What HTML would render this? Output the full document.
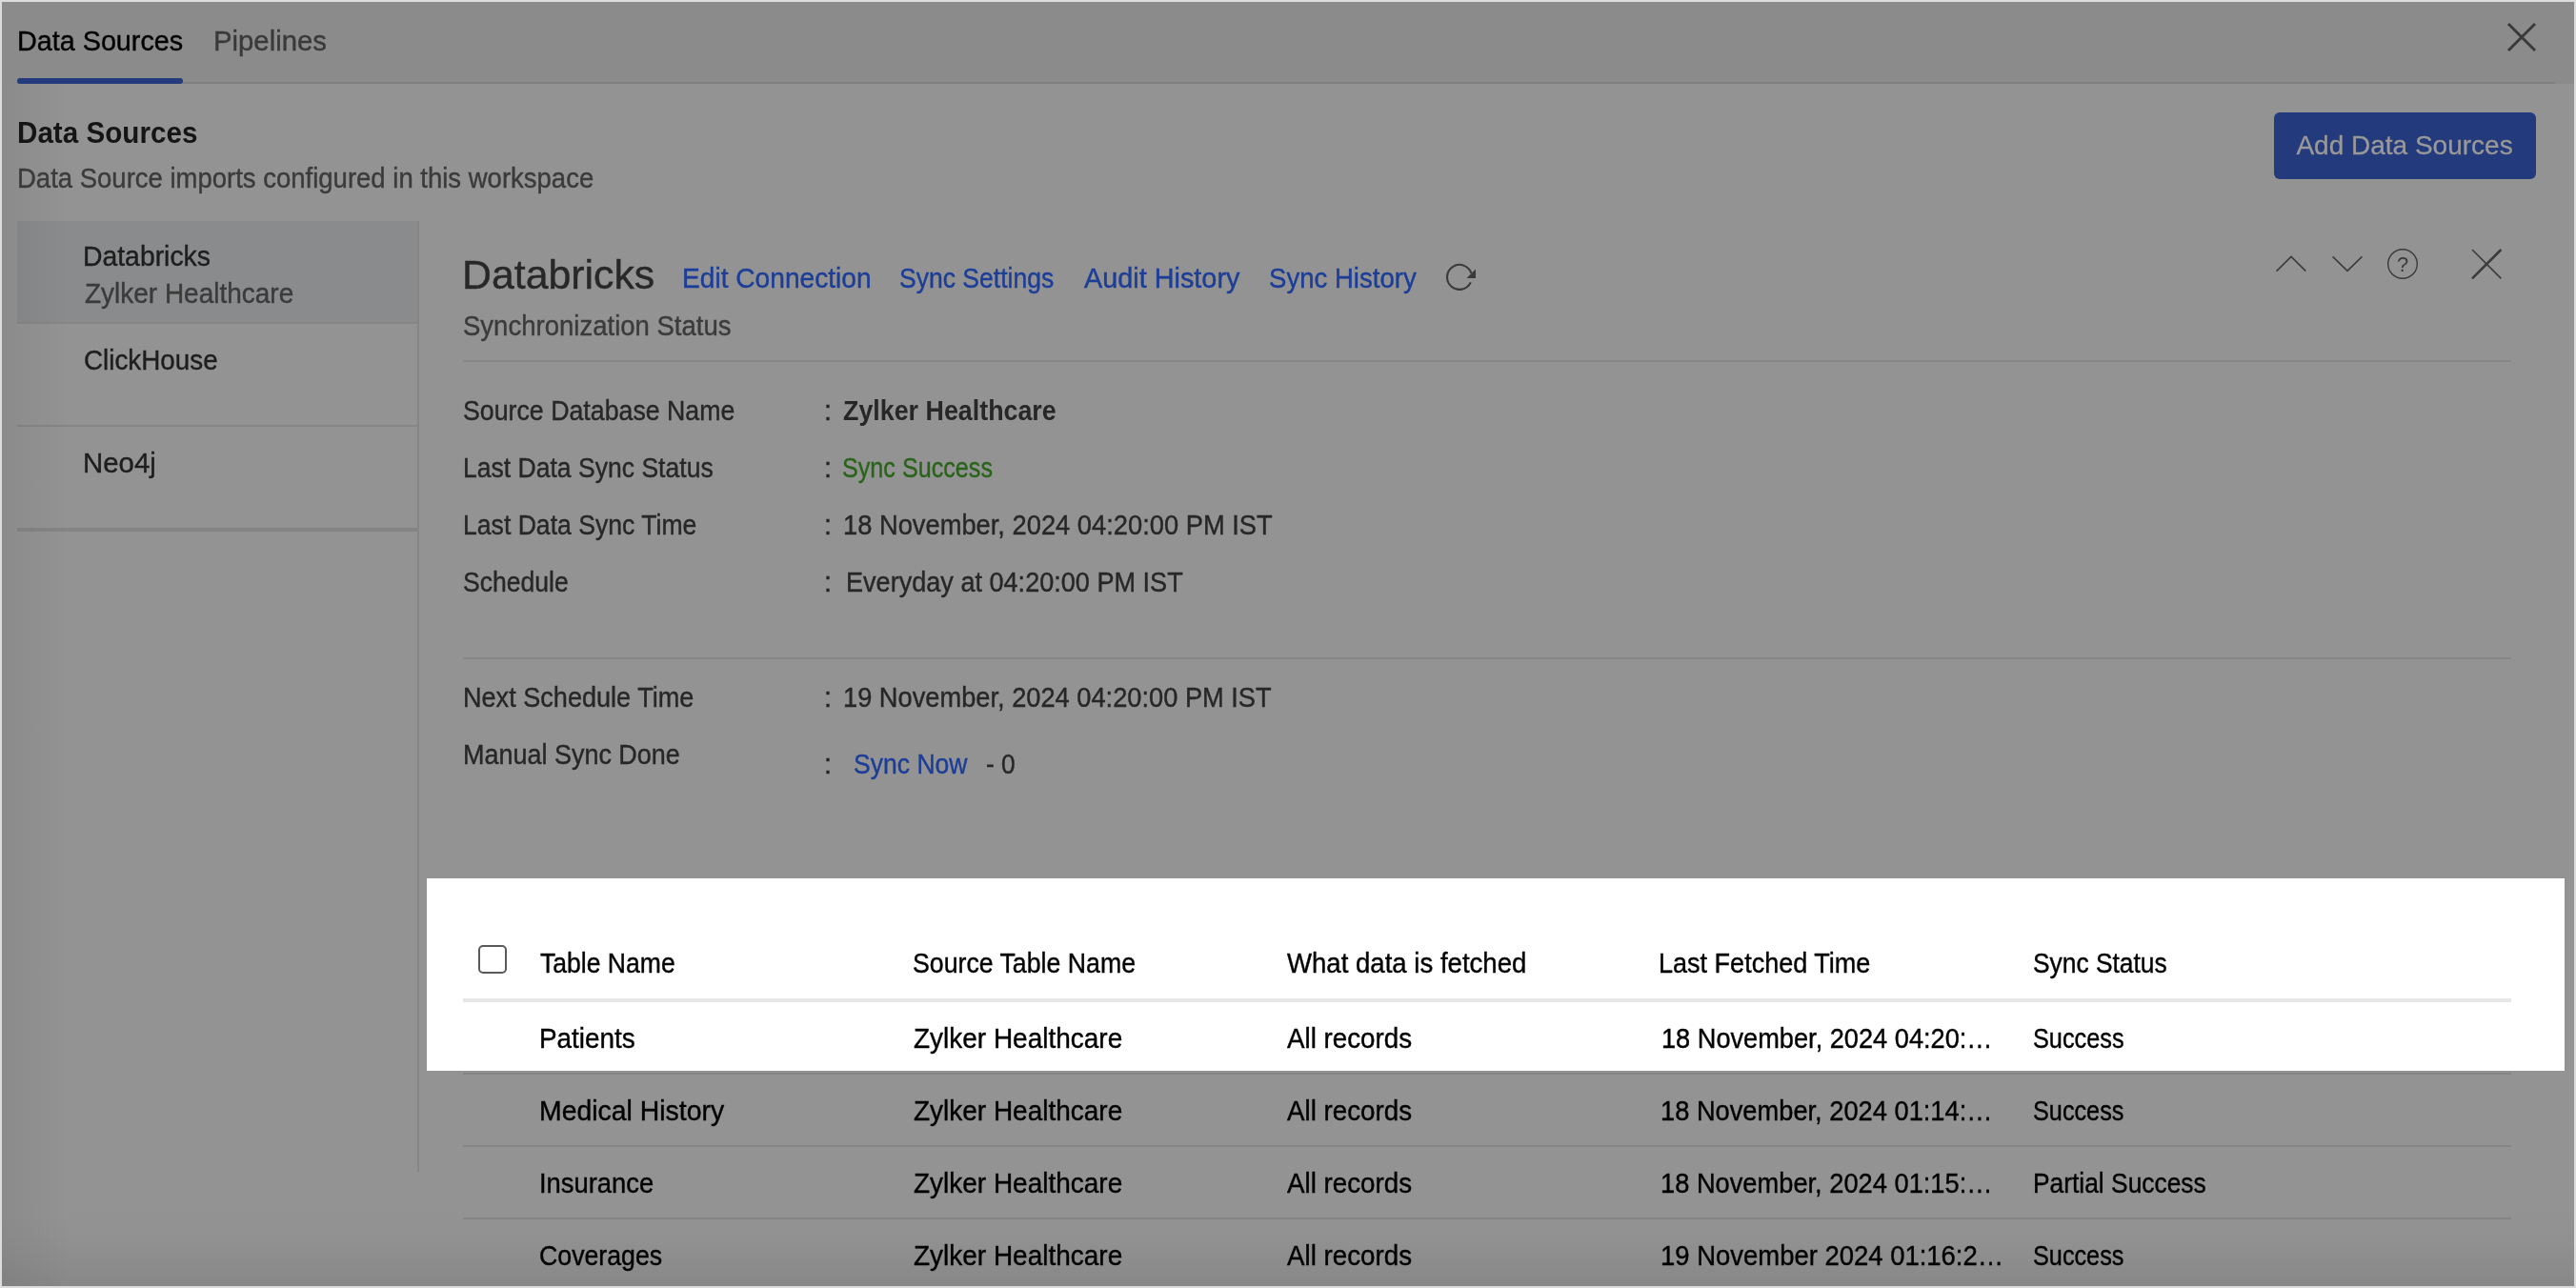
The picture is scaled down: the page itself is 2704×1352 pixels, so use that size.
<!DOCTYPE html>
<html lang="en">
<head>
<meta charset="utf-8">
<title>Data Sources</title>
<style>
html,body{margin:0;padding:0;}
body{width:2704px;height:1352px;position:relative;overflow:hidden;background:#939393;font-family:"Liberation Sans",sans-serif;}
.abs{position:absolute;}
.t,.q{position:absolute;white-space:nowrap;line-height:1;font-family:"Liberation Sans",sans-serif;-webkit-text-stroke:0.4px currentColor;}
#t4{-webkit-text-stroke:0.3px currentColor;}
#frame{left:0;top:0;width:2700px;height:1348px;border:2px solid #dcdcdc;z-index:50;pointer-events:none;}
#topbar{left:2px;top:2px;width:2700px;height:86px;background:#8b8b8b;}
#topline{left:18px;top:86px;width:2664px;height:2px;background:#7f7f7f;}
#tabsel{left:18px;top:82px;width:174px;height:6px;border-radius:3px;background:#233a7c;}
#addbtn{left:2387px;top:118px;width:275px;height:70px;border-radius:6px;background:#233a7c;}
#sideSel{left:18px;top:232px;width:420px;height:106px;background:#8a8b8d;}
.hl{position:absolute;height:2px;background:#868686;}
#sideV{left:438px;top:232px;width:2px;height:998px;background:#858585;}
#spot{left:448px;top:922px;width:2244px;height:202px;background:#ffffff;}
#chk{left:502px;top:992px;width:26px;height:26px;border:2px solid #5a5a5a;border-radius:5px;background:#fff;}
</style>
</head>
<body>
<div class="abs" id="topbar"></div>
<div class="abs" id="topline"></div>
<div class="abs" id="tabsel"></div>
<div class="abs" id="addbtn"></div>
<div class="abs" id="sideSel"></div>
<div class="hl" style="left:18px;top:338px;width:421px;"></div>
<div class="hl" style="left:18px;top:446px;width:421px;"></div>
<div class="hl" style="left:18px;top:554px;width:421px;height:4px;background:#848484;"></div>
<div class="abs" id="sideV"></div>
<div class="hl" style="left:486px;top:378px;width:2150px;"></div>
<div class="hl" style="left:486px;top:690px;width:2150px;"></div>
<div class="abs" id="spot"></div>
<div class="abs" id="chk"></div>
<div class="hl" style="left:486px;top:1048px;width:2150px;height:4px;background:#e6e6e6;"></div>
<div class="hl" style="left:486px;top:1126px;width:2150px;background:#858585;"></div>
<div class="hl" style="left:486px;top:1202px;width:2150px;background:#858585;"></div>
<div class="hl" style="left:486px;top:1278px;width:2150px;background:#858585;"></div>

<div class="abs" style="left:2px;top:88px;width:72px;height:1262px;background:linear-gradient(to right,rgba(0,0,0,0.055),rgba(0,0,0,0));"></div>
<div class="abs" style="left:2px;top:1272px;width:2700px;height:78px;background:linear-gradient(to bottom,rgba(0,0,0,0),rgba(0,0,0,0.025) 45%,rgba(0,0,0,0.08));"></div>
<svg class="abs" style="left:0;top:0;z-index:5;will-change:transform;" width="2704" height="1352" viewBox="0 0 2704 1352" fill="none" stroke="#3a3a3a" stroke-linecap="butt">
  <g stroke-width="3"><path d="M2633 25 L2661 53 M2661 25 L2633 53"/></g>
  <g stroke-width="1.5"><path d="M2389.6 284.6 L2405 269.4 L2420.4 284.6"/><path d="M2448.6 269.4 L2464 284.4 L2479.4 269.4"/></g>
  <circle cx="2522" cy="277" r="15.3" stroke-width="1.4"/>
  <g><path d="M2595 262 L2625.4 292.4" stroke-width="1.6"/><path d="M2625.4 262 L2595 292.4" stroke-width="2.5"/></g>
  <path d="M1544.4 286.9 A13 13 0 1 0 1543.8 296.4" stroke-width="2.1"/>
  <path d="M1549 282.5 L1549 292 L1539.5 292 Z" fill="#3a3a3a" stroke="none"/>
  <text x="2522" y="285.2" font-family="Liberation Sans, sans-serif" font-size="22" text-anchor="middle" fill="#3a3a3a" stroke="none">?</text>
</svg>
<div class="abs" id="txt" style="left:0;top:0;width:2704px;height:1352px;will-change:transform;">
<span class="t" id="t0" style="left:17.50px;top:28.00px;font-size:30px;color:#000000;letter-spacing:0.000px;transform:scaleX(0.9582);transform-origin:0 50%;">Data Sources</span>
<span class="t" id="t1" style="left:224.00px;top:28.00px;font-size:30px;color:#3a3a3a;letter-spacing:0.000px;transform:scaleX(0.9768);transform-origin:0 50%;">Pipelines</span>
<span class="t" id="t2" style="left:17.50px;top:123.00px;font-size:32px;color:#151515;letter-spacing:0.000px;transform:scaleX(0.9258);transform-origin:0 50%;font-weight:700;-webkit-text-stroke:0;">Data Sources</span>
<span class="t" id="t3" style="left:17.50px;top:173.00px;font-size:29px;color:#3b3b3b;letter-spacing:0.000px;transform:scaleX(0.9481);transform-origin:0 50%;">Data Source imports configured in this workspace</span>
<span class="t" id="t4" style="left:2410.40px;top:139.00px;font-size:28px;color:#999999;letter-spacing:0.000px;transform:scaleX(1.0000);transform-origin:0 50%;">Add Data Sources</span>
<span class="t" id="t5" style="left:86.80px;top:255.00px;font-size:29px;color:#1e1e1e;letter-spacing:0.000px;transform:scaleX(0.9777);transform-origin:0 50%;">Databricks</span>
<span class="t" id="t6" style="left:88.80px;top:294.00px;font-size:29px;color:#3b3b3b;letter-spacing:0.000px;transform:scaleX(0.9646);transform-origin:0 50%;">Zylker Healthcare</span>
<span class="t" id="t7" style="left:87.50px;top:364.00px;font-size:29px;color:#1e1e1e;letter-spacing:0.000px;transform:scaleX(0.9587);transform-origin:0 50%;">ClickHouse</span>
<span class="t" id="t8" style="left:86.50px;top:472.00px;font-size:29px;color:#1e1e1e;letter-spacing:0.000px;transform:scaleX(1.0139);transform-origin:0 50%;">Neo4j</span>
<span class="t" id="t9" style="left:485.00px;top:267.00px;font-size:43px;color:#282828;letter-spacing:0.000px;transform:scaleX(0.9958);transform-origin:0 50%;">Databricks</span>
<span class="t" id="t10" style="left:716.00px;top:278.00px;font-size:29px;color:#1c3d98;letter-spacing:0.000px;transform:scaleX(0.9702);transform-origin:0 50%;">Edit Connection</span>
<span class="t" id="t11" style="left:944.00px;top:278.00px;font-size:29px;color:#1c3d98;letter-spacing:0.000px;transform:scaleX(0.9148);transform-origin:0 50%;">Sync Settings</span>
<span class="t" id="t12" style="left:1137.50px;top:278.00px;font-size:29px;color:#1c3d98;letter-spacing:0.000px;transform:scaleX(0.9940);transform-origin:0 50%;">Audit History</span>
<span class="t" id="t13" style="left:1332.00px;top:278.00px;font-size:29px;color:#1c3d98;letter-spacing:0.000px;transform:scaleX(0.9506);transform-origin:0 50%;">Sync History</span>
<span class="t" id="t14" style="left:486.00px;top:328.00px;font-size:29px;color:#3b3b3b;letter-spacing:0.000px;transform:scaleX(0.9492);transform-origin:0 50%;">Synchronization Status</span>
<span class="t" id="t15" style="left:486.00px;top:417.00px;font-size:29px;color:#272727;letter-spacing:0.000px;transform:scaleX(0.9221);transform-origin:0 50%;">Source Database Name</span>
<span class="t" id="t16" style="left:486.00px;top:477.00px;font-size:29px;color:#272727;letter-spacing:0.000px;transform:scaleX(0.9155);transform-origin:0 50%;">Last Data Sync Status</span>
<span class="t" id="t17" style="left:486.00px;top:537.00px;font-size:29px;color:#272727;letter-spacing:0.000px;transform:scaleX(0.9170);transform-origin:0 50%;">Last Data Sync Time</span>
<span class="t" id="t18" style="left:486.00px;top:597.00px;font-size:29px;color:#272727;letter-spacing:0.000px;transform:scaleX(0.9160);transform-origin:0 50%;">Schedule</span>
<span class="t" id="t19" style="left:486.00px;top:718.00px;font-size:29px;color:#272727;letter-spacing:0.000px;transform:scaleX(0.9339);transform-origin:0 50%;">Next Schedule Time</span>
<span class="t" id="t20" style="left:486.00px;top:778.00px;font-size:29px;color:#272727;letter-spacing:0.000px;transform:scaleX(0.9298);transform-origin:0 50%;">Manual Sync Done</span>
<span class="t" id="t21" style="left:865.00px;top:417.00px;font-size:29px;color:#272727;letter-spacing:0.000px;">:</span>
<span class="t" id="t22" style="left:865.00px;top:477.00px;font-size:29px;color:#272727;letter-spacing:0.000px;">:</span>
<span class="t" id="t23" style="left:865.00px;top:537.00px;font-size:29px;color:#272727;letter-spacing:0.000px;">:</span>
<span class="t" id="t24" style="left:865.00px;top:597.00px;font-size:29px;color:#272727;letter-spacing:0.000px;">:</span>
<span class="t" id="t25" style="left:865.00px;top:718.00px;font-size:29px;color:#272727;letter-spacing:0.000px;">:</span>
<span class="t" id="t26" style="left:865.00px;top:788.00px;font-size:29px;color:#272727;letter-spacing:0.000px;">:</span>
<span class="t" id="t27" style="left:884.50px;top:417.00px;font-size:29px;color:#272727;letter-spacing:0.000px;transform:scaleX(0.9253);transform-origin:0 50%;font-weight:700;-webkit-text-stroke:0;">Zylker Healthcare</span>
<span class="t" id="t28" style="left:883.50px;top:477.00px;font-size:29px;color:#29641a;letter-spacing:0.000px;transform:scaleX(0.8674);transform-origin:0 50%;">Sync Success</span>
<span class="t" id="t29" style="left:885.00px;top:537.00px;font-size:29px;color:#272727;letter-spacing:0.000px;transform:scaleX(0.9413);transform-origin:0 50%;">18 November, 2024 04:20:00 PM IST</span>
<span class="t" id="t30" style="left:888.00px;top:597.00px;font-size:29px;color:#272727;letter-spacing:0.000px;transform:scaleX(0.9337);transform-origin:0 50%;">Everyday at 04:20:00 PM IST</span>
<span class="t" id="t31" style="left:885.00px;top:718.00px;font-size:29px;color:#272727;letter-spacing:0.000px;transform:scaleX(0.9392);transform-origin:0 50%;">19 November, 2024 04:20:00 PM IST</span>
<span class="t" id="t32" style="left:896.00px;top:788.00px;font-size:29px;color:#1c3d98;letter-spacing:0.000px;transform:scaleX(0.9154);transform-origin:0 50%;">Sync Now</span>
<span class="t" id="t33" style="left:1035.00px;top:788.00px;font-size:29px;color:#272727;letter-spacing:0.000px;transform:scaleX(0.9062);transform-origin:0 50%;">- 0</span>
<span class="t" id="t34" style="left:567.00px;top:997.00px;font-size:29px;color:#000000;letter-spacing:0.000px;transform:scaleX(0.9156);transform-origin:0 50%;">Table Name</span>
<span class="t" id="t35" style="left:957.80px;top:997.00px;font-size:29px;color:#000000;letter-spacing:0.000px;transform:scaleX(0.9206);transform-origin:0 50%;">Source Table Name</span>
<span class="t" id="t36" style="left:1350.50px;top:997.00px;font-size:29px;color:#000000;letter-spacing:0.000px;transform:scaleX(0.9508);transform-origin:0 50%;">What data is fetched</span>
<span class="t" id="t37" style="left:1741.00px;top:997.00px;font-size:29px;color:#000000;letter-spacing:0.000px;transform:scaleX(0.9322);transform-origin:0 50%;">Last Fetched Time</span>
<span class="t" id="t38" style="left:2133.50px;top:997.00px;font-size:29px;color:#000000;letter-spacing:0.000px;transform:scaleX(0.9092);transform-origin:0 50%;">Sync Status</span>
<span class="t" id="t39" style="left:566.00px;top:1076.00px;font-size:29px;color:#000000;letter-spacing:0.000px;transform:scaleX(0.9608);transform-origin:0 50%;">Patients</span>
<span class="t" id="t40" style="left:958.80px;top:1076.00px;font-size:29px;color:#000000;letter-spacing:0.000px;transform:scaleX(0.9646);transform-origin:0 50%;">Zylker Healthcare</span>
<span class="t" id="t41" style="left:1350.50px;top:1076.00px;font-size:29px;color:#000000;letter-spacing:0.000px;transform:scaleX(0.9563);transform-origin:0 50%;">All records</span>
<span class="t" id="t42" style="left:1743.50px;top:1076.00px;font-size:29px;color:#000000;letter-spacing:0.000px;transform:scaleX(0.9372);transform-origin:0 50%;">18 November, 2024 04:20:…</span>
<span class="t" id="t43" style="left:2133.50px;top:1076.00px;font-size:29px;color:#000000;letter-spacing:0.000px;transform:scaleX(0.8718);transform-origin:0 50%;">Success</span>
<span class="t" id="t44" style="left:565.50px;top:1152.00px;font-size:29px;color:#000000;letter-spacing:0.000px;transform:scaleX(0.9797);transform-origin:0 50%;">Medical History</span>
<span class="t" id="t45" style="left:958.80px;top:1152.00px;font-size:29px;color:#000000;letter-spacing:0.000px;transform:scaleX(0.9646);transform-origin:0 50%;">Zylker Healthcare</span>
<span class="t" id="t46" style="left:1350.50px;top:1152.00px;font-size:29px;color:#000000;letter-spacing:0.000px;transform:scaleX(0.9563);transform-origin:0 50%;">All records</span>
<span class="t" id="t47" style="left:1742.50px;top:1152.00px;font-size:29px;color:#000000;letter-spacing:0.000px;transform:scaleX(0.9399);transform-origin:0 50%;">18 November, 2024 01:14:…</span>
<span class="t" id="t48" style="left:2133.50px;top:1152.00px;font-size:29px;color:#000000;letter-spacing:0.000px;transform:scaleX(0.8705);transform-origin:0 50%;">Success</span>
<span class="t" id="t49" style="left:566.00px;top:1228.00px;font-size:29px;color:#000000;letter-spacing:0.000px;transform:scaleX(0.9441);transform-origin:0 50%;">Insurance</span>
<span class="t" id="t50" style="left:958.80px;top:1228.00px;font-size:29px;color:#000000;letter-spacing:0.000px;transform:scaleX(0.9646);transform-origin:0 50%;">Zylker Healthcare</span>
<span class="t" id="t51" style="left:1350.50px;top:1228.00px;font-size:29px;color:#000000;letter-spacing:0.000px;transform:scaleX(0.9563);transform-origin:0 50%;">All records</span>
<span class="t" id="t52" style="left:1742.50px;top:1228.00px;font-size:29px;color:#000000;letter-spacing:0.000px;transform:scaleX(0.9399);transform-origin:0 50%;">18 November, 2024 01:15:…</span>
<span class="t" id="t53" style="left:2133.50px;top:1228.00px;font-size:29px;color:#000000;letter-spacing:0.000px;transform:scaleX(0.9091);transform-origin:0 50%;">Partial Success</span>
<span class="t" id="t54" style="left:565.50px;top:1304.00px;font-size:29px;color:#000000;letter-spacing:0.000px;transform:scaleX(0.9209);transform-origin:0 50%;">Coverages</span>
<span class="t" id="t55" style="left:958.80px;top:1304.00px;font-size:29px;color:#000000;letter-spacing:0.000px;transform:scaleX(0.9646);transform-origin:0 50%;">Zylker Healthcare</span>
<span class="t" id="t56" style="left:1350.50px;top:1304.00px;font-size:29px;color:#000000;letter-spacing:0.000px;transform:scaleX(0.9563);transform-origin:0 50%;">All records</span>
<span class="t" id="t57" style="left:1742.50px;top:1304.00px;font-size:29px;color:#000000;letter-spacing:0.000px;transform:scaleX(0.9468);transform-origin:0 50%;">19 November 2024 01:16:2…</span>
<span class="t" id="t58" style="left:2133.50px;top:1304.00px;font-size:29px;color:#000000;letter-spacing:0.000px;transform:scaleX(0.8705);transform-origin:0 50%;">Success</span>
</div>
<div class="abs" id="frame"></div>
</body>
</html>
